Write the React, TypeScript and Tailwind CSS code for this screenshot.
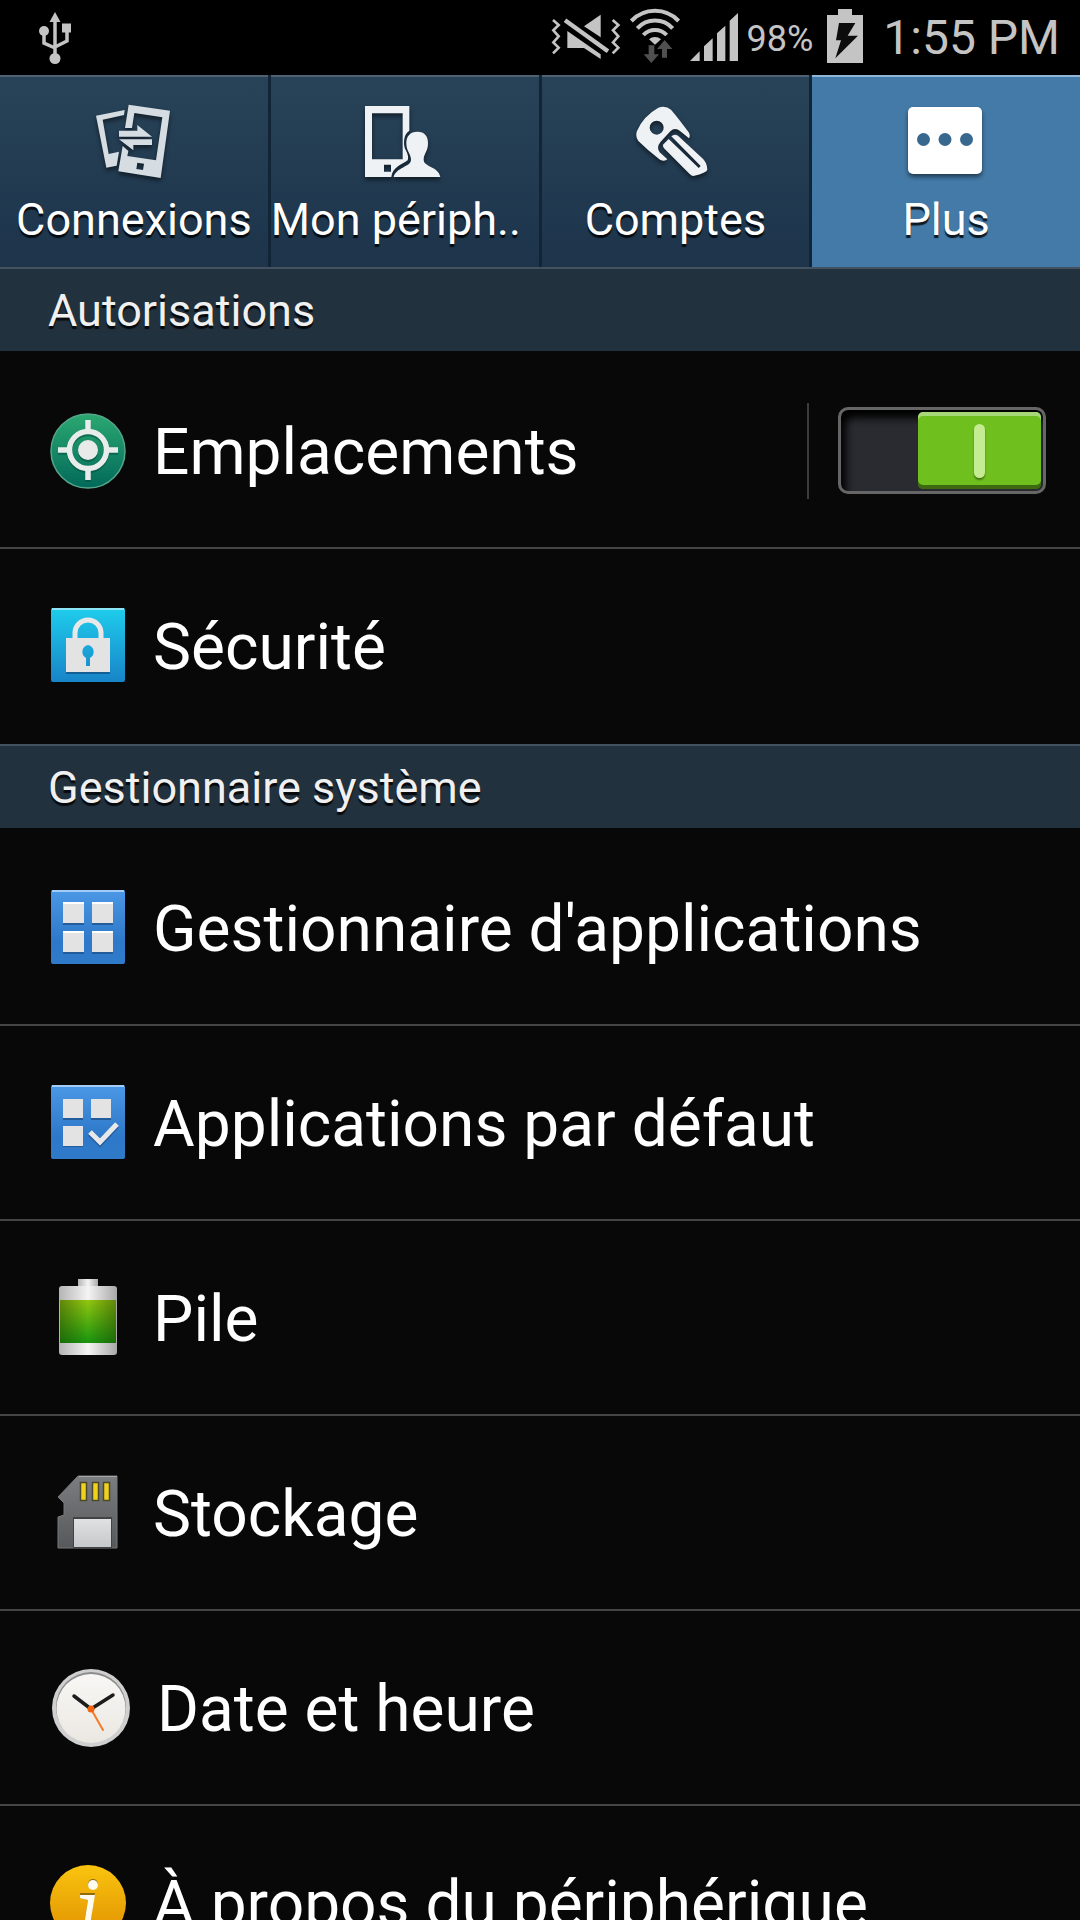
import { useState } from "react";
import type { ReactNode } from "react";

const statusGlyph = "h-[75px] shrink-0";

const UsbIcon = () => (
  <svg viewBox="0 0 34 75" className="h-[75px] w-[34px]" fill="#c4c4c4">
    <path d="M17 12l5.500 10h-11z" />
    <path d="M17 20v38M17 48L6 43V32M17 47L29 41V32" fill="none" stroke="#c4c4c4" strokeWidth="3.500" />
    <circle cx="6" cy="31" r="5" />
    <path d="M24 23.500h9v9h-9z" />
    <circle cx="17" cy="58.500" r="5.500" />
  </svg>
);

const MuteIcon = () => (
  <svg viewBox="19 -15 210 225" className={`${statusGlyph} w-[70px]`} fill="#c4c4c4">
    <path d="M118 64L168 29V97z" />
    <path d="M68 78L168 148V162L118 129H68z" />
    <path d="M61 46L190 139" stroke="#c4c4c4" strokeWidth="13" />
    <path
      d="M25 45L42 60L26 76L42 94L26 112L42 128L25 145M204 45L221 60L205 76L221 94L205 112L221 128L204 145"
      fill="none"
      stroke="#c4c4c4"
      strokeWidth="8"
    />
  </svg>
);

const WifiIcon = () => (
  <svg viewBox="252 -15 156 225" className={`${statusGlyph} w-[52px]`}>
    <g fill="none" stroke="#c4c4c4" strokeWidth="12">
      <path d="M259 48A98 98 0 0 1 401 48" />
      <path d="M277 70A72 72 0 0 1 383 70" />
      <path d="M295 90A48 48 0 0 1 365 90" />
    </g>
    <path d="M312 103A26 26 0 0 1 348 103L330 119z" fill="#c4c4c4" />
    <path d="M311 121H328V148H342L319 174L296 148H311zM351 158V132H336L359 105L382 132H366V158z" fill="#505050" />
  </svg>
);

const SignalIcon = () => (
  <svg viewBox="435 -15 150 225" className={`${statusGlyph} w-[50px]`} fill="#c4c4c4">
    <path d="M438 168L467 139V168zM480 168V124L506 100V168zM519 168V85L544 62V168zM557 168V47L582 24V168z" />
  </svg>
);

const ChargingIcon = () => (
  <svg viewBox="852 -15 108 225" className={`${statusGlyph} w-[36px]`}>
    <path d="M852 30H885V12H927V30H960V174H852z" fill="#c4c4c4" />
    <path d="M888 54H937L914 92H945L877 160L894 106H879z" fill="#0c0c0c" />
  </svg>
);

const tabIcon = "size-[80px] drop-shadow-[0_3px_2px_rgba(0,0,0,0.5)]";

const ConnectionsIcon = () => (
  <svg viewBox="12 24 240 240" className={tabIcon} fill="#d5dce2">
    <path d="M18 62L104 45L102 60L38 74L56 177L87 170L80 212L49 218z" />
    <path
      fillRule="evenodd"
      d="M116 29L240 47L212 249L85 229L98 153L115 168L112 183L198 196L217 67L133 54L126 99H105zM142 203L162 206L159 225L139 222z"
    />
    <path d="M87 107H142V90L186 125H87zM186 133V150H130V166L87 133z" />
  </svg>
);

const DeviceIcon = () => (
  <svg viewBox="824 24 240 240" className={tabIcon} fill="#eef2f5">
    <path
      fillRule="evenodd"
      d="M824 33H957V107C941 116 938 142 944 161C951 173 956 185 952 196C932 210 906 218 903 246H824zM845 55V193H937V55zM881 209V230H902V209z"
    />
    <path d="M981 110C1003 110 1013 124 1013 144C1013 170 1000 176 1000 194C1000 216 1045 214 1050 246H910C917 216 962 216 962 194C962 176 948 170 948 144C948 124 959 110 981 110z" />
  </svg>
);

const KeyIcon = () => (
  <svg viewBox="270 294 240 240" className={tabIcon} fill="#eef2f5">
    <path
      fillRule="evenodd"
      d="M340 308Q362 301 378 314Q402 342 431 382Q437 392 432 400L406 379Q390 365 376 379L347 410Q333 426 344 442L367 463Q358 471 345 464Q308 436 280 408Q270 394 276 378Q294 334 340 308zM335 347A21 21 0 1 0 335 389A21 21 0 1 0 335 347z"
    />
    <path
      fillRule="evenodd"
      d="M354 419L371 402L461 489L467 483L379 394Q388 386 399 392L472 460Q486 472 487 494Q486 503 445 513Q440 513 434 507L357 430Q353 424 354 419z"
    />
  </svg>
);

const MoreIcon = () => (
  <svg viewBox="0 0 80 80" className={tabIcon}>
    <rect x="2" y="4" width="74" height="67" rx="5" fill="#fff" />
    <g fill="#39688f">
      <circle cx="17.500" cy="36.500" r="6.500" />
      <circle cx="39" cy="36.500" r="6.500" />
      <circle cx="60.500" cy="36.500" r="6.500" />
    </g>
  </svg>
);

const rowIcon = "size-[78px] shrink-0";

const LocationIcon = () => (
  <svg viewBox="0 0 78 78" className={rowIcon}>
    <defs>
      <linearGradient id="location" x2="0" y2="1">
        <stop offset="0" stopColor="#2ba871" />
        <stop offset="1" stopColor="#02695a" />
      </linearGradient>
    </defs>
    <circle cx="39" cy="39" r="37" fill="url(#location)" stroke="#55a58a" strokeWidth="1.500" />
    <g fill="none" strokeWidth="5.500">
      <g stroke="#04513f" transform="translate(0 2)" opacity="0.6">
        <circle cx="39" cy="38" r="18.500" />
        <path d="M39 8v12M39 56v12M9 38h12M57 38h12" />
      </g>
      <g stroke="#e8eceb">
        <circle cx="39" cy="38" r="18.500" />
        <path d="M39 8v12M39 56v12M9 38h12M57 38h12" />
      </g>
    </g>
    <circle cx="39" cy="40" r="10" fill="#04513f" opacity="0.6" />
    <circle cx="39" cy="38" r="10" fill="#e8eaea" />
  </svg>
);

const SecurityIcon = () => (
  <svg viewBox="0 0 78 78" className={rowIcon}>
    <defs>
      <linearGradient id="security" x2="0" y2="1">
        <stop offset="0" stopColor="#1fcdec" />
        <stop offset="1" stopColor="#1784c8" />
      </linearGradient>
    </defs>
    <rect x="2" y="1" width="74" height="74" rx="2" fill="url(#security)" />
    <path d="M3 2H75" stroke="#8de6f6" strokeWidth="2" />
    <path d="M17 64H61V67H17z" fill="#135f96" />
    <path d="M26 32V26a13 13 0 0 1 26 0V32" fill="none" stroke="#e8e8e8" strokeWidth="5" />
    <path
      fillRule="evenodd"
      d="M17 31H61V65H17zM39 38A7 7 0 0 0 37 51V59H41V51A7 7 0 0 0 39 38z"
      fill="#e3e3e3"
    />
  </svg>
);

const BlueTile = ({ id, children }: { id: string; children: ReactNode }) => (
  <svg viewBox="0 0 78 78" className={rowIcon}>
    <defs>
      <linearGradient id={id} x2="0" y2="1">
        <stop offset="0" stopColor="#4b98e6" />
        <stop offset="0.700" stopColor="#2d78c8" />
        <stop offset="1" stopColor="#2f7ac9" />
      </linearGradient>
    </defs>
    <rect x="2" y="1" width="74" height="74" rx="2" fill={`url(#${id})`} />
    <path d="M3 2H75" stroke="#a3cdf6" strokeWidth="2" />
    {children}
  </svg>
);

const AppsIcon = () => (
  <BlueTile id="apps">
    <path d="M14 15h21v21h-21zM43 15h21v21h-21zM14 44h21v21h-21zM43 44h21v21h-21z" fill="#235c9b" />
    <path d="M14 13h21v21h-21zM43 13h21v21h-21zM14 42h21v21h-21zM43 42h21v21h-21z" fill="#e3e3e3" />
    <path d="M14 13h21v2h-21zM43 13h21v2h-21zM14 42h21v2h-21zM43 42h21v2h-21z" fill="#fff" />
  </BlueTile>
);

const DefaultAppsIcon = () => (
  <BlueTile id="default-apps">
    <path d="M14 17h20v19h-20zM42 17h20v19h-20zM14 44h20v19h-20z" fill="#235c9b" />
    <path d="M14 15h20v19h-20zM42 15h20v19h-20zM14 42h20v20h-20z" fill="#e3e3e3" />
    <path d="M41 50L51 60L68 42" fill="none" stroke="#235c9b" strokeWidth="5" />
    <path d="M41 48L51 58L68 40" fill="none" stroke="#e8e8e8" strokeWidth="5" />
  </BlueTile>
);

const BatteryIcon = () => (
  <svg viewBox="0 0 78 78" className={rowIcon}>
    <defs>
      <linearGradient id="metal">
        <stop offset="0" stopColor="#b4b4b4" />
        <stop offset="0.500" stopColor="#f4f4f4" />
        <stop offset="1" stopColor="#a8a8a8" />
      </linearGradient>
      <linearGradient id="charge" x2="0" y2="1">
        <stop offset="0" stopColor="#93c70f" />
        <stop offset="1" stopColor="#18960f" />
      </linearGradient>
      <linearGradient id="charge-shade">
        <stop offset="0" stopColor="#1c2a00" stopOpacity="0.4" />
        <stop offset="0.500" stopColor="#1c2a00" stopOpacity="0" />
        <stop offset="1" stopColor="#1c2a00" stopOpacity="0.4" />
      </linearGradient>
    </defs>
    <path d="M29 0H49V8H29z" fill="url(#metal)" />
    <rect x="10" y="7" width="58" height="69" rx="3" fill="url(#metal)" />
    <path d="M11 21H67V64H11z" fill="url(#charge)" />
    <path d="M11 21H67V64H11z" fill="url(#charge-shade)" />
  </svg>
);

const StorageIcon = () => (
  <svg viewBox="0 0 78 78" className={rowIcon}>
    <defs>
      <linearGradient id="card" x2="0" y2="1">
        <stop offset="0" stopColor="#7b7d80" />
        <stop offset="1" stopColor="#56585a" />
      </linearGradient>
      <linearGradient id="card-label" x2="0" y2="1">
        <stop offset="0" stopColor="#e0e1e3" />
        <stop offset="1" stopColor="#c6c8ca" />
      </linearGradient>
    </defs>
    <path d="M29 2H68V74H9V43L15 41V29L9 23z" fill="url(#card)" stroke="#77797b" />
    <path d="M30 2.500H68" stroke="#a5a7a9" />
    <path d="M24 43H63V74H24z" fill="#414345" />
    <path d="M25 45H62V73H25z" fill="url(#card-label)" />
    <g fill="#efd21e" stroke="#4c4a2c" strokeWidth="1.500">
      <path d="M31.500 8.500h6v18h-6zM43.500 8.500h6v18h-6zM54.500 8.500h6v18h-6z" />
    </g>
  </svg>
);

const ClockIcon = () => (
  <svg viewBox="-1 -1 82 82" className="size-[82px] shrink-0">
    <defs>
      <linearGradient id="dial" x2="0" y2="1">
        <stop offset="0" stopColor="#f8f7f5" />
        <stop offset="1" stopColor="#ebe8e2" />
      </linearGradient>
    </defs>
    <circle cx="41" cy="40" r="39" fill="#cfcfcf" />
    <circle cx="41" cy="39" r="35" fill="#8d8d8d" />
    <circle cx="41" cy="40.500" r="34.500" fill="url(#dial)" />
    <path d="M41 41L63 27M41 41L24 28" stroke="#1c1c1c" strokeWidth="3.500" strokeLinecap="round" />
    <path d="M41 41L53 62" stroke="#f47a2c" strokeWidth="2" strokeLinecap="round" />
    <circle cx="41" cy="41" r="3.500" fill="#f4640f" />
  </svg>
);

const InfoIcon = () => (
  <svg viewBox="0 0 78 78" className={rowIcon}>
    <defs>
      <linearGradient id="info" x2="0" y2="1">
        <stop offset="0" stopColor="#f9c40f" />
        <stop offset="1" stopColor="#e08e00" />
      </linearGradient>
    </defs>
    <circle cx="39" cy="39" r="38" fill="url(#info)" />
    <g fill="#8f6b0c">
      <circle cx="44" cy="20" r="5" />
      <path d="M31 29H46L41 60L46 58V62L34 67L39 36L31 33z" />
    </g>
    <g fill="#fdfaf0">
      <circle cx="44" cy="21" r="5" />
      <path d="M31 31H46L41 61L46 59V63L34 68L39 36L31 34z" />
    </g>
  </svg>
);

const tabs = [
  { id: "connexions", label: "Connexions", icon: <ConnectionsIcon /> },
  { id: "peripherique", label: "Mon périph..", icon: <DeviceIcon />, clipped: true },
  { id: "comptes", label: "Comptes", icon: <KeyIcon /> },
  { id: "plus", label: "Plus", icon: <MoreIcon /> },
];

const sections = [
  {
    title: "Autorisations",
    rows: [
      { label: "Emplacements", icon: <LocationIcon />, toggle: true },
      { label: "Sécurité", icon: <SecurityIcon /> },
    ],
  },
  {
    title: "Gestionnaire système",
    rows: [
      { label: "Gestionnaire d'applications", icon: <AppsIcon /> },
      { label: "Applications par défaut", icon: <DefaultAppsIcon /> },
      { label: "Pile", icon: <BatteryIcon /> },
      { label: "Stockage", icon: <StorageIcon /> },
      { label: "Date et heure", icon: <ClockIcon /> },
      { label: "À propos du périphérique", icon: <InfoIcon /> },
    ],
  },
];

const StatusBar = () => (
  <header className="flex h-[75px] shrink-0 items-center bg-black pl-[38px] pr-[20px] text-[#c4c4c4]">
    <UsbIcon />
    <div className="ml-auto flex items-center gap-[8px]">
      <MuteIcon />
      <WifiIcon />
      <SignalIcon />
      <span className="pt-[2px] text-[36px] leading-none">98%</span>
    </div>
    <div className="ml-[14px] flex items-center gap-[20px]">
      <ChargingIcon />
      <span className="text-[48px] leading-none">1:55 PM</span>
    </div>
  </header>
);

const Switch = ({ label }: { label: string }) => {
  const [on, setOn] = useState(true);
  return (
    <button
      type="button"
      role="switch"
      aria-checked={on}
      aria-label={label}
      onClick={() => setOn(!on)}
      className={`flex h-[87px] w-[208px] shrink-0 rounded-[10px] border-3 border-[#666] bg-[#2a2b31] p-[2px] shadow-[inset_5px_8px_8px_#000] ${on ? "justify-end" : "justify-start"}`}
    >
      <span
        className={`flex h-[77px] w-[123px] items-center justify-center rounded-[5px] shadow-[inset_0_4px_0_rgba(255,255,255,0.4),inset_0_-4px_0_rgba(0,0,0,0.45)] ${on ? "bg-[#6fc01e]" : "bg-[#5c5d62]"}`}
      >
        <span className="h-[54px] w-[11px] rounded-full bg-[#c5ec93] shadow-[0_2px_2px_rgba(0,0,0,0.4)]" />
      </span>
    </button>
  );
};

const App = () => {
  const [active, setActive] = useState("plus");

  return (
    <div className="flex h-screen flex-col overflow-hidden bg-[#080808] font-[Roboto,sans-serif] text-white">
      <StatusBar />

      <nav role="tablist" className="grid shrink-0 grid-cols-4 gap-[3px] bg-[#112536]">
        {tabs.map((tab) => (
          <button
            key={tab.id}
            type="button"
            role="tab"
            aria-selected={active === tab.id}
            onClick={() => setActive(tab.id)}
            className={`flex flex-col items-center border-t-2 pb-[17px] pt-[26px] ${
              active === tab.id
                ? "border-[#8fb6d6] bg-[#437aa7]"
                : "border-[#4f6172] bg-linear-to-b from-[#284358] to-[#1d344b]"
            }`}
          >
            {tab.icon}
            <span
              className={`mt-[7px] w-full whitespace-nowrap text-[45px] leading-[60px] [text-shadow:0_3px_1px_rgba(0,0,0,0.8)] ${
                tab.clipped ? "text-left" : "text-center"
              }`}
            >
              {tab.label}
            </span>
          </button>
        ))}
      </nav>

      <main className="min-h-0 flex-1 overflow-y-auto [scrollbar-width:none]">
        {sections.map((section) => (
          <section key={section.title}>
            <h2 className="mb-[3px] flex h-[84px] items-center border-t-2 border-[#435160] bg-[#22313e] pl-[48px] pt-[2px] text-[45px] leading-[60px] text-[#f0f0f0] [text-shadow:0_3px_1px_rgba(0,0,0,0.8)]">
              {section.title}
            </h2>
            <ul>
              {section.rows.map((row) => (
                <li
                  key={row.label}
                  className="flex h-[195px] items-center border-b-2 border-[#454545] pl-[49px] pr-[34px] last:border-[#080808]"
                >
                  <a href="#" className="flex flex-1 items-center gap-[26px]">
                    {row.icon}
                    <span className="whitespace-nowrap pt-[4px] text-[64px] leading-[80px]">{row.label}</span>
                  </a>
                  {row.toggle && (
                    <div className="flex h-[96px] items-center border-l-2 border-[#3c3c3c] pl-[29px]">
                      <Switch label={row.label} />
                    </div>
                  )}
                </li>
              ))}
            </ul>
          </section>
        ))}
      </main>
    </div>
  );
};

export default App;
